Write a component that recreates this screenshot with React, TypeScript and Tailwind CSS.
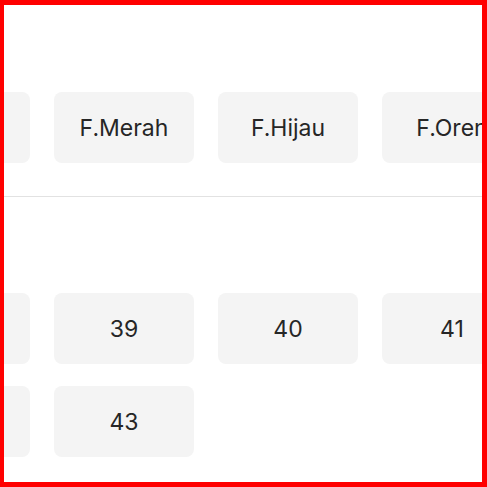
import React from "react";

// first item of each list is scrolled out of view on the left
const colors = ["", "F.Merah", "F.Hijau", "F.Oren"];
const sizes = ["", "39", "40", "41", "", "43"];

const Option = ({ label }: { label: string }) => (
  <button className="h-[71px] w-[140px] shrink-0 rounded-lg bg-[#f4f4f4] text-[23px] text-[#262626] flex items-center justify-center pt-px">
    {label}
  </button>
);

const App: React.FC = () => {
  return (
    <div
      className="w-[487px] h-[487px] overflow-hidden bg-white border-[red] border-t-[5px] border-r-[5px] border-b-[5px] border-l-[4px]"
      style={{ fontFamily: "Inter, 'Noto Sans', sans-serif" }}
    >
      {/* Warna */}
      <div className="pt-[87px] pb-[33px] border-b border-[#e2e2e2]">
        <div className="flex gap-6 -ml-[114px]">
          {colors.map((c, i) => (
            <Option key={i} label={c} />
          ))}
        </div>
      </div>

      {/* Ukuran */}
      <div className="pt-[96px]">
        <div className="grid grid-cols-[repeat(4,140px)] gap-x-6 gap-y-[22px] -ml-[114px] w-max">
          {sizes.map((s, i) => (
            <Option key={i} label={s} />
          ))}
        </div>
      </div>
    </div>
  );
};

export default App;
